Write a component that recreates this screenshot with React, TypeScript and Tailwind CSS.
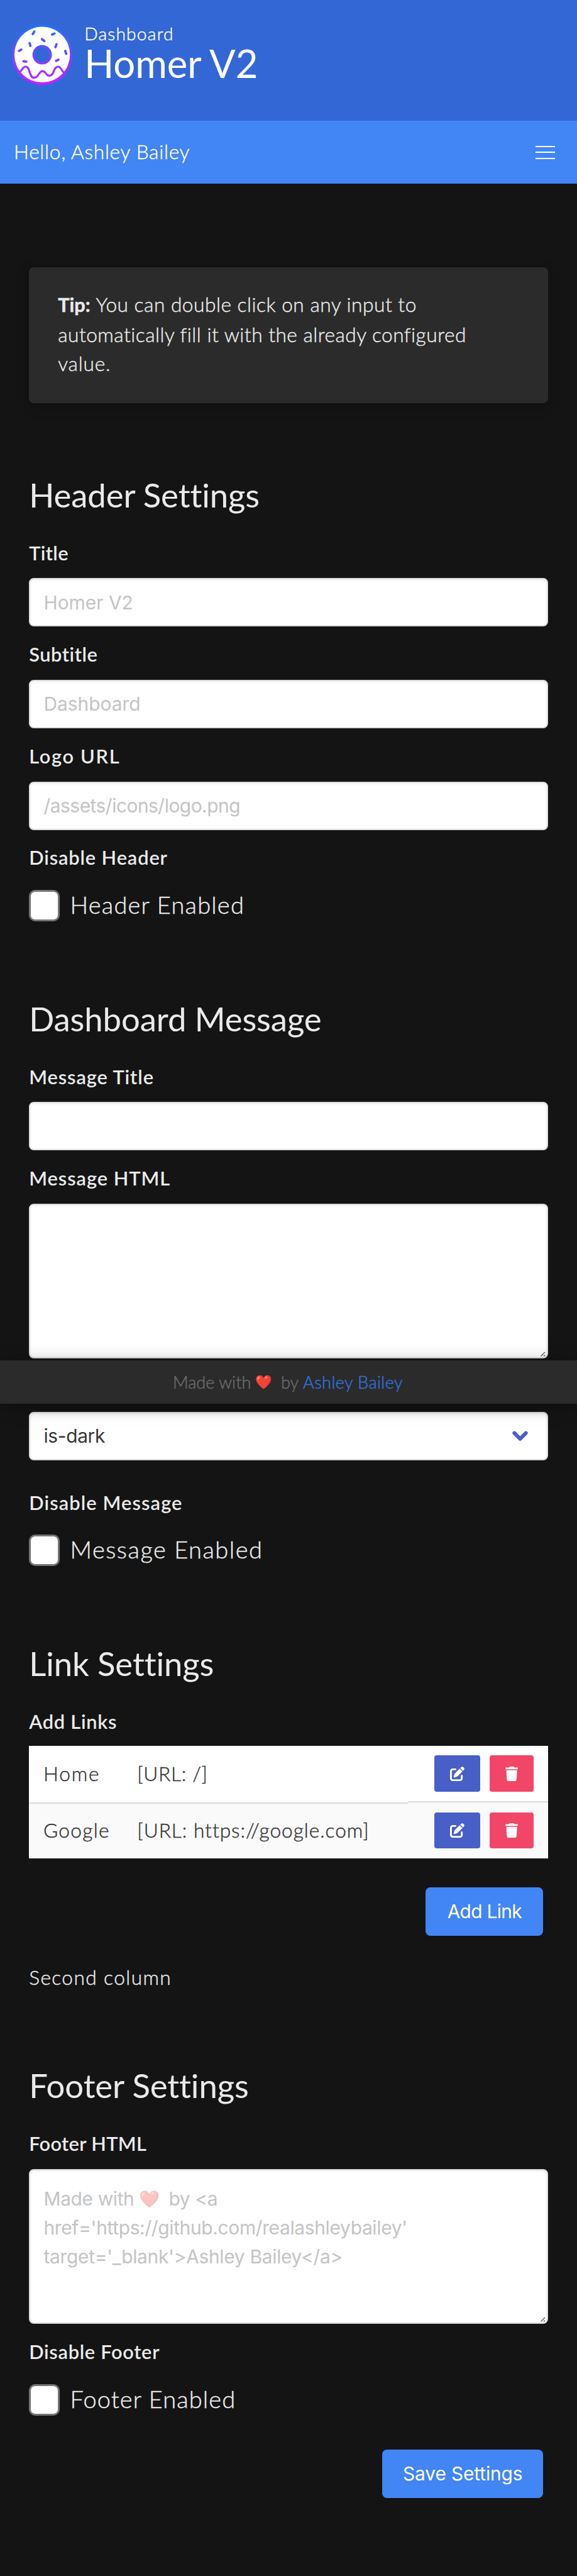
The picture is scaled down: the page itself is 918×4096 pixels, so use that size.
import type { ReactNode } from 'react';
import { FaPenToSquare, FaTrash } from 'react-icons/fa6';

function DonutLogo() {
  const sprinkles = [
    'M103 47L111 35', 'M199 49.500L211 45', 'M149 73L161 82', 'M87.500 92L91.500 106', 'M221 98L216 112',
    'M35 131L46 124', 'M264.500 131L269.500 145', 'M57 182L71 184', 'M219 180L231 174.500',
  ];
  return (
    <svg viewBox="0 0 300 300" className="h-[96.2px] w-[96.2px] shrink-0">
      <defs>
        <linearGradient id="donut" gradientUnits="userSpaceOnUse" x1="0" y1="0" x2="0" y2="300">
          <stop offset="0" stopColor="#1a73ff" />
          <stop offset="1" stopColor="#c81eff" />
        </linearGradient>
      </defs>
      <circle cx="150" cy="150" r="150" fill="url(#donut)" />
      <circle cx="150" cy="149" r="138" fill="#fff" />
      <circle cx="150" cy="150" r="42.500" fill="#3367d6" stroke="url(#donut)" strokeWidth="11.500" />
      <g fill="none" stroke="url(#donut)" strokeLinecap="round">
        {sprinkles.map((d) => <path key={d} d={d} strokeWidth="12" />)}
        <path
          strokeWidth="10"
          d="M39 235C52 228 52 209 68 209C92 209 84 264 110 264C134 264 132 231 152 231C168 231 168 254 186 254C212 254 204 209 229 209C244 209 246 231 258 238"
        />
      </g>
    </svg>
  );
}

function Heading({ children, className }: { children: ReactNode; className: string }) {
  return (
    <h2 className={`mb-10 h-[60px] text-[52.7px] font-normal leading-[61px] tracking-[-0.1px] [-webkit-text-stroke:0] [font-variant-ligatures:none] ${className}`}>
      {children}
    </h2>
  );
}

function Label({ children, className }: { children: ReactNode; className: string }) {
  return (
    <div className={`h-[46.2px] text-[30.8px] font-semibold leading-[47.2px] [-webkit-text-stroke:0] ${className}`}>{children}</div>
  );
}

const box =
  'rounded-[7.7px] border-2 border-[#dbdbdb] bg-white font-[Inter,sans-serif] font-normal text-[29.9px] text-[#c4c4c4] [-webkit-text-stroke:0] shadow-[inset_0_2px_4px_rgba(10,10,10,0.05)]';

function Input({ children, className = '' }: { children?: ReactNode; className?: string }) {
  return <div className={`mt-[17.6px] flex h-[77px] items-center px-[21.300px] ${box} ${className}`}>{children}</div>;
}

function TextArea({ children }: { children?: ReactNode }) {
  return (
    <div className={`relative mt-[17.6px] h-[246.3px] px-[21.300px] pt-[21.500px] leading-[46.2px] ${box}`}>
      {children}
      <svg viewBox="0 0 8 8" className="absolute bottom-[1.500px] right-[1.500px] h-2 w-2">
        <path d="M0.500 7.500L7 1M5 7.500L7 5.500" stroke="#555" strokeWidth="1.300" />
      </svg>
    </div>
  );
}

function Check({ children, className }: { children: ReactNode; className: string }) {
  return (
    <div className="mt-[28.3px] flex h-[50px] gap-[16.800px]">
      <span className="-ml-[0.500px] h-[50px] w-[49px] rounded-[10px] border-[3.500px] border-[#767676] bg-white" />
      <span className={`text-[38px] leading-[46px] ${className}`}>{children}</span>
    </div>
  );
}

function RowButtons({ className }: { className: string }) {
  return (
    <div className={`flex w-[223.2px] gap-[15.4px] pl-[42.3px] pt-[15.4px] ${className}`}>
      <button className="flex h-[57.7px] w-[73.1px] items-center justify-center rounded-[3.8px] bg-[#485fc7] text-white">
        <FaPenToSquare className="h-[23px] w-[23px]" />
      </button>
      <button className="flex h-[57.7px] w-[69.3px] items-center justify-center rounded-[3.8px] bg-[#f14668] text-white">
        <FaTrash className="h-[23px] w-[20.200px]" />
      </button>
    </div>
  );
}

function Action({ children, className }: { children: ReactNode; className: string }) {
  return (
    <button
      className={`mr-[7.7px] flex h-[77px] items-center justify-center self-end rounded-[7.7px] bg-[#4285f4] font-[Inter,sans-serif] text-[29.9px] font-normal text-white [-webkit-text-stroke:0] ${className}`}
    >
      {children}
    </button>
  );
}

export default function App() {
  return (
    <div className="relative h-[4096px] w-[918px] overflow-hidden bg-[#141414] font-[Lato,sans-serif] text-[31.7px] font-light text-[#eaeaea] [-webkit-text-stroke:0.45px]">
      <header className="flex h-[192.4px] items-start bg-[#3367d6] pl-[19.2px] pt-[38.500px] text-white">
        <DonutLogo />
        <div className="ml-[18.800px]">
          <div className="h-[31px] text-[28.2px] leading-[28.500px] tracking-[1.2px]">Dashboard</div>
          <h1 className="h-[62px] text-[61.6px] font-normal leading-[60px] [-webkit-text-stroke:0]">Homer V2</h1>
        </div>
      </header>
      <nav className="flex h-[100px] items-center justify-between bg-[#4285f4] pl-[22px] pr-[34.7px] text-white">
        <span className="pb-[2px] tracking-[0.71px]">Hello, Ashley Bailey</span>
        <span className="flex w-[31px] flex-col gap-[7.7px]">
          <span className="h-[2px] bg-white" />
          <span className="h-[2px] bg-white" />
          <span className="h-[2px] bg-white" />
        </span>
      </nav>

      <main className="flex flex-col px-[46.2px] pt-[132.8px]">
        <div className="h-[215.500px] rounded-[7.7px] bg-[#2b2b2b] pl-[46px] pt-[36.200px] leading-[46.2px] shadow-[0_4px_20px_rgba(0,0,0,0.25)]">
          <p className="whitespace-nowrap">
            <strong className="text-[30.8px] font-bold">Tip:</strong> <span className="tracking-[0.5px]">You can double click on any input to</span>
          </p>
          <p className="whitespace-nowrap tracking-[0.47px]">automatically fill it with the already configured</p>
          <p className="tracking-[0.78px]">value.</p>
        </div>

        <Heading className="mt-[115px]">Header Settings</Heading>
        <Label className="tracking-[0.35px]">Title</Label>
        <Input>Homer V2</Input>
        <Label className="mt-[20.8px] tracking-[0.55px]">Subtitle</Label>
        <Input>Dashboard</Input>
        <Label className="mt-[20.8px] tracking-[1.65px]">Logo URL</Label>
        <Input className="tracking-[-0.49px]">/assets/icons/logo.png</Input>
        <Label className="mt-[20.8px] tracking-[0.86px]">Disable Header</Label>
        <Check className="tracking-[1.2px]">Header Enabled</Check>

        <Heading className="mt-[123.7px]">Dashboard Message</Heading>
        <Label className="tracking-[0.9px]">Message Title</Label>
        <Input />
        <Label className="mt-[20.8px] tracking-[0.93px]">Message HTML</Label>
        <TextArea />
        <div className={`mt-[84.7px] flex h-[77px] items-center justify-between pl-[21.300px] pr-[30px] ${box}`}>
          <span className="tracking-[-0.35px] text-[#363636]">is-dark</span>
          <svg viewBox="0 0 25 17" className="h-[17px] w-[25px]">
            <path d="M3.300 3.600L12.500 12.800L21.700 3.600" fill="none" stroke="#485fc7" strokeWidth="6" strokeLinecap="round" strokeLinejoin="round" />
          </svg>
        </div>
        <Label className="mt-[43.8px] tracking-[1.1px]">Disable Message</Label>
        <Check className="tracking-[1.5px]">Message Enabled</Check>

        <Heading className="mt-[123.7px]">Link Settings</Heading>
        <Label className="tracking-[0.73px]">Add Links</Label>
        <div className="mt-[15.8px] h-[178.9px] bg-[#fafafa] text-[#363636]">
          <div className="flex h-[90.4px] bg-white">
            <div className="flex h-[92.4px] flex-1 border-b-2 border-[#dbdbdb] bg-white pl-[22.800px] leading-[88.500px]">
              <span className="w-[149.300px] tracking-[1.8px]">Home</span>
              <span className="tracking-[0.66px]">[URL: /]</span>
            </div>
            <RowButtons className="border-b-2 border-[#dbdbdb]" />
          </div>
          <div className="flex h-[88.500px]">
            <div className="flex flex-1 pl-[22.800px] leading-[88px]">
              <span className="w-[149.300px] tracking-[1.3px]">Google</span>
              <span className="whitespace-nowrap tracking-[0.95px]">[URL: https://google.com]</span>
            </div>
            <RowButtons className="" />
          </div>
        </div>
        <Action className="mt-[46.2px] w-[186.7px] tracking-[-0.7px]">Add Link</Action>
        <p className="mt-[43.500px] h-[46.2px] leading-[46.2px] tracking-[1.4px]">Second column</p>

        <Heading className="mt-[117.6px]">Footer Settings</Heading>
        <Label className="tracking-[0.32px]">Footer HTML</Label>
        <TextArea>
          <div className="flex whitespace-pre tracking-[-0.35px]">
            <span>Made with</span>
            <span className="ml-[8px] mr-[13px] w-[34px] text-[26.500px] opacity-30">❤️</span>
            <span>by &lt;a</span>
          </div>
          <div className="tracking-[-0.33px]">href='https://github.com/realashleybailey'</div>
          <div className="tracking-[-0.3px]">target='_blank'&gt;Ashley Bailey&lt;/a&gt;</div>
        </TextArea>
        <Label className="mt-[20.8px] tracking-[0.69px]">Disable Footer</Label>
        <Check className="tracking-[1.1px]">Footer Enabled</Check>
        <Action className="mt-[54.7px] w-[255.8px] tracking-[-0.12px]">Save Settings</Action>
      </main>

      <footer className="absolute inset-x-0 top-[2162.500px] flex h-[69.2px] items-center bg-[#2b2b2b] pl-[275px] text-[27.2px] leading-[67px] text-[#6b6b6b] shadow-[0_4px_28px_rgba(0,0,0,0.35)]">
        <span>Made with</span>
        <span className="ml-[6.500px] w-[41px] text-[21.500px]">❤️</span>
        <span>by</span>
        <a className="ml-[6.800px] tracking-[0.35px] text-[#3273dc]">Ashley Bailey</a>
      </footer>
    </div>
  );
}
